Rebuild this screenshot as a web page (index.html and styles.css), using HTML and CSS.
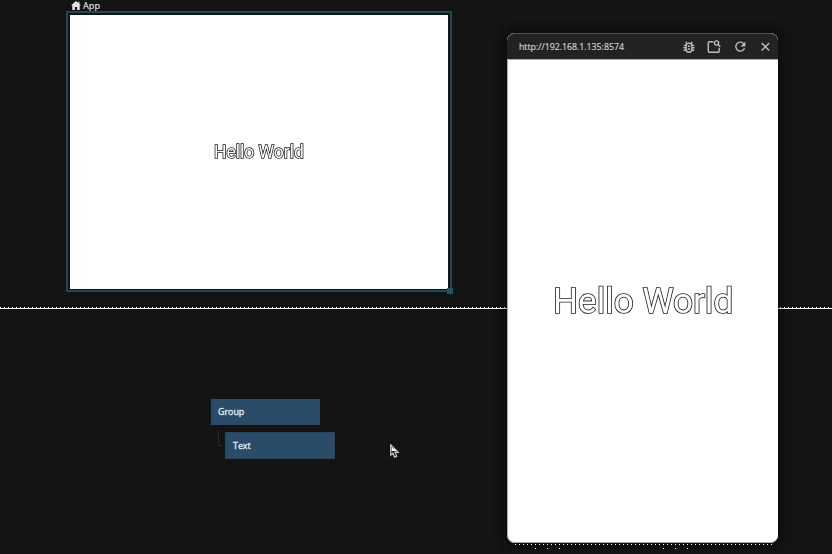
FILE: index.html
```html
<!DOCTYPE html>
<html lang="en">
<head>
<meta charset="utf-8">
<title>App</title>
<link rel="stylesheet" href="styles.css">
</head>
<body>
<main class="editor">
  <section class="preview">
    <div class="preview-title">
      <svg class="home" viewBox="0 0 10 9"><path d="M5 0 0 4.6h1.3V9h2.6V6h2.2v3h2.6V4.6H10L8.4 3.1V.8H7.1v1.1z"/></svg>
      <span>App</span>
    </div>
    <div class="frame">
      <div class="screen"><span class="hello hello-small">Hello World</span></div>
      <i class="handle"></i>
    </div>
  </section>
  <div class="divider"></div>
  <section class="canvas">
    <div class="node node-group">Group</div>
    <i class="link"></i>
    <div class="node node-text">Text</div>
    <svg class="cursor" viewBox="0 0 9 14"><path d="M.7.8v10.4l2.1-2 1.8 3.9 2.2-1-1.8-3.7h3.2z"/><path class="cursor-tip" d="M2.2 4.3v2.2h3.1z"/></svg>
  </section>
</main>
<aside class="window">
  <header class="bar">
    <span class="url">http://192.168.1.135:8574</span>
    <nav class="tools">
      <svg viewBox="0 0 14 14"><path d="M4.1 5.2Q4.1 3.2 7 3.2t2.9 2v4.1q0 3-2.9 3t-2.9-3zM4.8 3.7 3.9 1.8M9.2 3.7l.9-1.9M4 5.4H1.7M4 7.8H1.4M4.1 10.2H1.7M10 5.4h2.3M10 7.8h2.6M9.9 10.2h2.4M5.8 6.3h2.4M5.8 9h2.4"/></svg>
      <svg viewBox="0 0 14 14"><path d="M6.2 1.8H2.3q-1 0-1 1v8.4q0 1 1 1h8.9q1 0 1-1V7.8"/><circle cx="9.5" cy="3" r="2.1"/><path d="m11 4.5 2.3 2.3"/></svg>
      <svg viewBox="0 0 14 14"><path d="M11.1 4.2A4.5 4.5 0 1 0 11.5 8.2"/><path class="solid" d="M12.4 1.6v4.8H7.6z"/></svg>
      <svg viewBox="0 0 14 14"><path d="m3.6 3 7.6 7.6m0-7.6-7.6 7.6"/></svg>
    </nav>
  </header>
  <div class="page"><span class="hello hello-large">Hello World</span></div>
  <svg class="specks" viewBox="0 0 270 6"><path d="M7 1.5h257"/><path class="sparse" d="M27 5.5h25M155 5.5h25"/></svg>
</aside>
</body>
</html>
```
FILE: styles.css
```css
* { box-sizing: border-box; }

body {
  margin: 0;
  overflow: hidden;
  font-family: "Open Sans", "Noto Sans", sans-serif;
  color: #ddd;
  background-color: #131313;
  background-image:
    repeating-linear-gradient(0deg, rgba(0, 0, 0, .22) 0 1px, transparent 1px 2px),
    repeating-linear-gradient(90deg, rgba(255, 255, 255, .025) 0 1px, transparent 1px 2px);
}

.editor {
  display: grid;
  grid-template-rows: 307px 2px 245px;
  width: 832px;
  height: 554px;
}

.preview { padding-left: 66px; }

.preview-title {
  display: flex;
  align-items: center;
  gap: 2px;
  height: 11px;
  padding-left: 5px;
  font-size: 9.2px;
  line-height: 11px;
  -webkit-text-stroke: .2px;
}

.home { width: 10px; height: 9px; fill: #e4e4e4; }

.frame {
  position: relative;
  width: 386px;
  height: 281px;
  padding: 2px;
  border: 2px solid #204857;
}

.screen {
  display: grid;
  place-items: center;
  width: 378px;
  height: 274px;
  background: #fff;
}

.handle {
  position: absolute;
  right: -3px;
  bottom: -4px;
  width: 6px;
  height: 6px;
  background: #235361;
}

.hello {
  font-family: Roboto, sans-serif;
  color: #fff;
  line-height: 1;
  white-space: nowrap;
  paint-order: stroke fill;
  will-change: transform;
}

.hello-small {
  padding-top: 1px;
  font-size: 17.5px;
  -webkit-text-stroke: 1.5px #111;
}

.hello-large {
  padding-top: 1px;
  font-size: 35.1px;
  -webkit-text-stroke: 1.7px #222;
}

.divider {
  border-bottom: 1px solid #fff;
  background: repeating-linear-gradient(90deg, #fff 0 1px, transparent 1px 4px);
}

.canvas { position: relative; }

.node {
  position: absolute;
  height: 26px;
  padding-left: 7px;
  font-size: 8.9px;
  line-height: 26px;
  color: #e6edf2;
  background-color: #2a4c69;
  -webkit-text-stroke: .3px;
}

.node-group { left: 211px; top: 90px; width: 109px; }

.node-text {
  left: 225px;
  top: 123px;
  width: 110px;
  height: 27px;
  border: 1px solid #244562;
}

.link {
  position: absolute;
  left: 218px;
  top: 121px;
  width: 4px;
  height: 16px;
  border: solid #2a2a2a;
  border-width: 0 0 1px 1px;
}

.cursor {
  position: absolute;
  left: 390px;
  top: 135px;
  width: 9px;
  height: 14px;
  fill: #222;
  stroke: #c8c8c8;
  stroke-width: 1.2;
}

.cursor .cursor-tip { fill: #fff; stroke: #fff; }

.window {
  position: absolute;
  left: 507px;
  top: 33px;
  width: 271px;
  height: 510px;
  border-radius: 8px;
  background: #fff;
  box-shadow: 0 0 9px 3px rgba(0, 0, 0, .45);
}

.bar {
  display: flex;
  align-items: center;
  justify-content: space-between;
  height: 26px;
  padding: 0 6px 0 12px;
  border-top: 1px solid #525252;
  border-radius: 8px 8px 0 0;
  background-color: #242424;
  background-image: repeating-linear-gradient(0deg, rgba(0, 0, 0, .1) 0 1px, transparent 1px 2px);
}

.url {
  font-size: 8.75px;
  line-height: 12px;
  color: #d0d0d0;
  -webkit-text-stroke: .2px;
}

.tools { display: flex; gap: 11.5px; }

.tools svg {
  width: 14px;
  height: 14px;
  fill: none;
  stroke: #bdbdbd;
  stroke-width: 1.4;
}

.tools .solid { fill: #bdbdbd; stroke: none; }

.page {
  display: grid;
  place-items: center;
  height: 484px;
  border: solid #aaa;
  border-width: 1px 0 1px 1px;
  border-radius: 0 0 8px 8px;
  background: #fff;
}

.specks {
  position: absolute;
  left: 1px;
  top: 510px;
  width: 270px;
  height: 6px;
  fill: none;
  stroke: #fff;
  stroke-dasharray: 1 3;
}

.specks .sparse { stroke-dasharray: 1 11; }
```
